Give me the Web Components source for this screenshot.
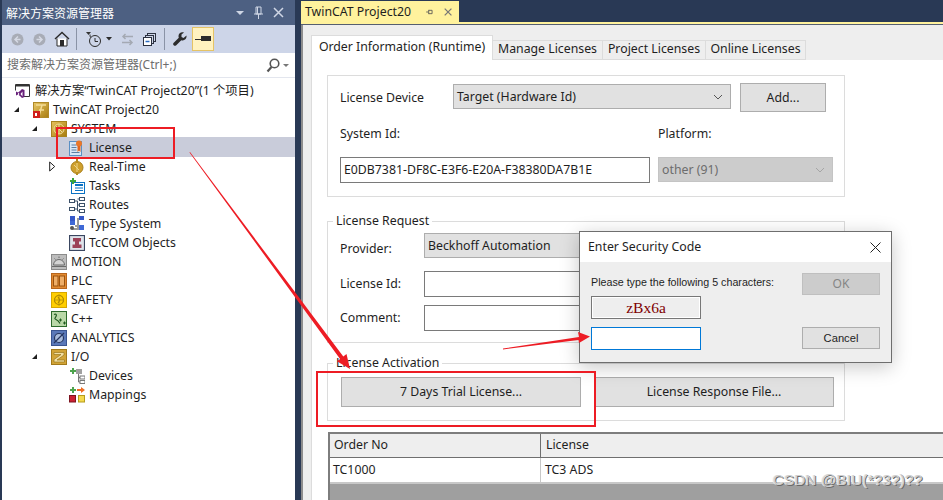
<!DOCTYPE html>
<html lang="zh-CN"><head><meta charset="utf-8"><title>TwinCAT</title>
<style>
html,body{margin:0;padding:0;height:500px;overflow:hidden;background:#fff}
body{font:12.3px/16px "Noto Sans","Noto Sans CJK SC",sans-serif;color:#1e1e1e}
</style></head><body>
<x-app>
  <x-explorer slot="left">
    <x-tree-item level="0" icon="solution">解决方案“TwinCAT Project20”(1 个项目)</x-tree-item>
    <x-tree-item level="1" icon="twincat" exp="open">TwinCAT Project20</x-tree-item>
    <x-tree-item level="2" icon="system" exp="open">SYSTEM</x-tree-item>
    <x-tree-item level="3" icon="license" selected>License</x-tree-item>
    <x-tree-item level="3" icon="realtime" exp="closed">Real-Time</x-tree-item>
    <x-tree-item level="3" icon="tasks">Tasks</x-tree-item>
    <x-tree-item level="3" icon="routes">Routes</x-tree-item>
    <x-tree-item level="3" icon="types">Type System</x-tree-item>
    <x-tree-item level="3" icon="tccom">TcCOM Objects</x-tree-item>
    <x-tree-item level="2" icon="motion">MOTION</x-tree-item>
    <x-tree-item level="2" icon="plc">PLC</x-tree-item>
    <x-tree-item level="2" icon="safety">SAFETY</x-tree-item>
    <x-tree-item level="2" icon="cpp">C++</x-tree-item>
    <x-tree-item level="2" icon="analytics">ANALYTICS</x-tree-item>
    <x-tree-item level="2" icon="io" exp="open">I/O</x-tree-item>
    <x-tree-item level="3" icon="devices">Devices</x-tree-item>
    <x-tree-item level="3" icon="mappings">Mappings</x-tree-item>
  </x-explorer>
  <x-document slot="right">
    <x-group label="" style="--pt:7px;--h:122px">
      <x-row>
        <x-label style="width:113px;height:29px">License Device</x-label>
        <x-select style="width:278px;margin-top:1px">Target (Hardware Id)</x-select>
        <x-button style="width:86px;height:29px;margin-left:9px">Add...</x-button>
      </x-row>
      <x-row style="margin-top:13px;--gap:8px">
        <x-label style="width:310px;height:18px">System Id:</x-label>
        <x-label style="width:175px;height:18px">Platform:</x-label>
      </x-row>
      <x-row style="margin-top:14px;--gap:8px">
        <x-field style="width:310px">E0DB7381-DF8C-E3F6-E20A-F38380DA7B1E</x-field>
        <x-select disabled style="width:175px">other (91)</x-select>
      </x-row>
    </x-group>
    <x-group label="License Request" style="--pt:11px;--h:122px;margin-top:24px">
      <x-row><x-label style="width:84px;padding-top:6px;box-sizing:border-box">Provider:</x-label><x-select style="width:409px">Beckhoff Automation</x-select></x-row>
      <x-row style="margin-top:13px"><x-label style="width:84px">License Id:</x-label><x-field style="width:409px"></x-field></x-row>
      <x-row style="margin-top:8px"><x-label style="width:84px">Comment:</x-label><x-field style="width:409px"></x-field></x-row>
    </x-group>
    <x-group label="License Activation" style="--pt:13px;--pl:13px;--h:58px;margin-top:20px">
      <x-row style="--gap:13px">
        <x-button style="width:240px;height:30px">7 Days Trial License...</x-button>
        <x-button style="width:240px;height:30px">License Response File...</x-button>
      </x-row>
    </x-group>
    <x-order-table></x-order-table>
  </x-document>
  <x-dialog slot="over"></x-dialog>
  <x-annotations slot="over"></x-annotations>
</x-app>
<script>
const ICONS={
solution:'<path d="M.5 1.500h14v12H9" fill="none" stroke="#333"/><path d="M.5 1.500v6" stroke="#333"/><path d="M.5 2h14v1.500H.5z" fill="#333"/><path d="M1 8.500l2 1 2-1.500 2-2 2.500 1v7l-2.500 1-2-2-2-1.500-2 1z" fill="#68217a"/><path d="M3 9.500l1.500 1.500L3 12.500zM7.500 8.500l-2 2.500 2 2.500z" fill="#fff"/>',
twincat:'<defs><linearGradient id="g" x1="0" y1="0" x2="1" y2="1"><stop offset="0" stop-color="#e8c766"/><stop offset="1" stop-color="#a97d10"/></linearGradient></defs><rect x=".5" y=".5" width="15" height="15" fill="url(#g)" stroke="#b08a28"/><path d="M3 3h10M9 3l-3 11M6 8h5" stroke="#f4dd96" stroke-width="1.500" fill="none"/><rect y="9" width="7" height="7" fill="#d0201a"/><rect x="2" y="11" width="2" height="3" fill="#fff"/>',
system:'<defs><linearGradient id="g" x1="0" y1="0" x2="1" y2="1"><stop offset="0" stop-color="#e6c25c"/><stop offset="1" stop-color="#a67b0d"/></linearGradient></defs><rect x=".5" y=".5" width="15" height="15" fill="url(#g)" stroke="#a8831e"/><circle cx="8" cy="8" r="5" fill="#c49a2a" stroke="#efdc9e"/><path d="M8 3v10M5 5l6 6" stroke="#efdc9e"/>',
license:'<rect x=".5" y="1.500" width="12" height="14" fill="#d8e7f6" stroke="#5a8fc4"/><path d="M2.500 5h5M2.500 7.500h5M2.500 10h5M2.500 12.500h8" stroke="#5b7fa5"/><circle cx="10" cy="3.500" r="3" fill="#e9772a"/><path d="M8.500 6h3v6l-1.500-1.500L8.500 12z" fill="#e2661f"/>',
realtime:'<circle cx="8" cy="8.500" r="6" fill="#cfa02e" stroke="#a97f1a"/><path d="M8 0v4M8 13v3" stroke="#b88d1f" stroke-width="2"/><path d="M8 4v9M5 6l5 5" stroke="#ecd488"/>',
tasks:'<rect x="2.500" y="4.500" width="13" height="11" fill="#fff" stroke="#0b72c4"/><rect x="6" y="6" width="8" height="2" fill="#0b72c4"/><path d="M6 10h8M6 12.500h8" stroke="#0b72c4"/><path d="M3 0h2v2h2v2H5v2H3V4H1V2h2z" fill="#3aa53a"/>',
routes:'<g fill="none" stroke="#3c5068"><rect x=".5" y="2.500" width="5" height="3"/><rect x="10.500" y=".5" width="5" height="3"/><rect x="10.500" y="6.500" width="5" height="3"/><rect x=".5" y="10.500" width="5" height="3"/><rect x="10.500" y="12.500" width="5" height="3"/><path d="M5.500 4h3v10h2M8.500 2h2M8.500 8h2M5.500 12h3"/></g>',
types:'<path d="M6 10h3V3h3" fill="none" stroke="#9a9a9a" stroke-width="2"/><path d="M9 5v8H3" fill="none" stroke="#9a9a9a" stroke-width="2"/><rect x="1" y="0" width="5" height="5" fill="#3558c8"/><rect x="1" y="5" width="5" height="4" fill="#3f69d6"/><rect x="10" y="0" width="5" height="4" fill="#3558c8"/><rect x="10" y="9" width="5" height="5" fill="#3f69d6"/><circle cx="3" cy="12" r="2" fill="#555"/>',
tccom:'<rect x=".5" y=".5" width="15" height="15" fill="#dfe3ea" stroke="#3a4660" stroke-width="1.200"/><path d="M4 3h8v3.500h-2v3h2.500V13h-9V9.500H6v-3H4z" fill="#9c4258"/>',
motion:'<rect x=".5" y=".5" width="15" height="15" fill="#bdbdbd" stroke="#8b8b8b"/><path d="M2.500 11a5.500 5.500 0 0 1 11 0z" fill="#d4d4d4" stroke="#6b6b6b"/><path d="M1 12.500h14" stroke="#6b6b6b"/><path d="M8 4v-1.500M4.500 5.500l-1-1M11.500 5.500l1-1" stroke="#6b6b6b"/>',
plc:'<rect x=".5" y=".5" width="15" height="15" fill="#e28a30" stroke="#b7651c"/><rect x="2.500" y="3" width="4.500" height="10" fill="#eeae68" stroke="#9a5310"/><rect x="8.500" y="3" width="5" height="10" fill="#eeae68" stroke="#9a5310"/>',
safety:'<rect x=".5" y=".5" width="15" height="15" fill="#ffce00" stroke="#d6a700"/><circle cx="8" cy="8" r="4.500" fill="none" stroke="#a78200" stroke-width="1.200"/><path d="M8 2v12M3 8h10" stroke="#c09a08"/><path d="M7 5l2 3-2 3" fill="none" stroke="#a78200"/>',
cpp:'<rect x=".5" y=".5" width="15" height="15" fill="#b9d8a8" stroke="#2c6b2c"/><path d="M3 3.500c2-1 3 0 2 2s-2 2 0 3 3 2 4 4" fill="none" stroke="#1f5a1f" stroke-width="1.200"/><path d="M8 9h3M9.500 7.500v3M12 12h3M13.500 10.500v3" stroke="#1f5a1f"/>',
analytics:'<rect x=".5" y=".5" width="15" height="15" fill="#5a78b8" stroke="#3a5490"/><circle cx="8" cy="8" r="4.500" fill="#a8bbdc" stroke="#26365f" stroke-width="1.200"/><path d="M3 13L13 3" stroke="#26365f" stroke-width="1.200"/>',
io:'<rect x=".5" y=".5" width="15" height="15" fill="#d2a437" stroke="#a27a1b"/><path d="M3 3.500h10v2.500L6 11h7.500v2H3v-2.500L10 5.500H3z" fill="#f1dea2" stroke="#8e6b12" stroke-width=".6"/>',
devices:'<path d="M3 0h2v2h2v2H5v2H3V4H1V2h2z" fill="#4da44d"/><rect x="7" y="1" width="6" height="5" fill="#a0a0a0"/><path d="M9.500 6v8h2M9.500 9.500h2" fill="none" stroke="#777"/><rect x="11" y="8" width="5" height="3" fill="#fff" stroke="#777"/><rect x="11" y="12.500" width="5" height="3" fill="#fff" stroke="#777"/>',
mappings:'<path d="M3 0h2v2h2v2H5v2H3V4H1V2h2z" fill="#4da44d"/><path d="M8 2h4V0l4 3-4 3V4H8z" fill="#ef6d22"/><rect x=".5" y="8.500" width="6" height="6.500" fill="#cc2132" stroke="#7d1420"/><rect x="9.500" y="8.500" width="6" height="6.500" fill="#f4d94c" stroke="#b69c1c"/>'
};
function def(name,css,html,extra){
  const tpl=document.createElement('template');
  tpl.innerHTML='<style>'+css+'</style>'+html;
  customElements.define(name,class extends HTMLElement{
    constructor(){super();this.attachShadow({mode:'open'}).append(tpl.content.cloneNode(true))}
    connectedCallback(){extra&&extra.call(this,this.shadowRoot)}
  });
}
def('x-icon',':host{display:inline-flex;width:16px;height:16px;flex:none}svg{display:block;width:100%;height:100%}','<svg viewBox="0 0 16 16"></svg>',function(r){r.querySelector('svg').innerHTML=ICONS[this.getAttribute('name')]||''});

def('x-app',`:host{display:grid;grid-template-columns:295px 648px;width:943px;height:500px;position:relative;overflow:hidden;background:#293955}`,
'<slot name="left"></slot><slot name="right"></slot><slot name="over"></slot>');

def('x-explorer',`:host{display:flex;flex-direction:column;height:500px;padding-left:2px;box-sizing:border-box;overflow:hidden}
.title{height:25px;flex:none;background:#4d6082;color:#fff;display:flex;align-items:center;padding:0 4px;gap:0}
.title span{flex:1;font-size:12px;margin-top:2px}
.tb{height:28px;flex:none;background:#cdd5e8;display:flex;align-items:center;box-sizing:border-box}
.tb svg{display:block;flex:none}
.sep{width:1px;height:22px;background:#8a93a6;flex:none}
.hot{width:22px;height:24px;box-sizing:border-box;background:#fff2c0;border:1px solid #e5c365;display:flex;align-items:center;justify-content:center;flex:none}
.search{height:25px;flex:none;box-sizing:border-box;background:#fff;border-bottom:1px solid #e3e6ee;display:flex;align-items:center;padding:0 5px;color:#6d6d6d;font-size:12px}
.search span{flex:1}
.tree{flex:1;background:#fff;padding-top:3px}`,
`<div class="title"><span>解决方案资源管理器</span>
<svg width="56" height="16" viewBox="0 0 56 16"><path d="M1 6h8l-4 4z" fill="#cfd6e5"/><path d="M21 2h5v7h-5zM23.500 9v5M19 9h9M22.500 2v7" fill="none" stroke="#cfd6e5"/><path d="M39 3l9 9M48 3l-9 9" stroke="#cfd6e5" stroke-width="1.500"/></svg></div>
<div class="tb">
<svg style="margin-left:9px" width="13" height="13" viewBox="0 0 13 13"><circle cx="6.500" cy="6.500" r="6" fill="#a8acb6"/><path d="M7 3.500L4 6.500l3 3M4 6.500h5.500" fill="none" stroke="#d5d9e4" stroke-width="1.500"/></svg>
<svg style="margin-left:9px" width="13" height="13" viewBox="0 0 13 13"><circle cx="6.500" cy="6.500" r="6" fill="#a8acb6"/><path d="M6 3.500l3 3-3 3M9 6.500H3.500" fill="none" stroke="#d5d9e4" stroke-width="1.500"/></svg>
<svg style="margin-left:8px" width="16" height="16" viewBox="0 0 16 16"><path d="M1 8l7-6.500L15 8" fill="none" stroke="#2a2a2a" stroke-width="1.400"/><path d="M3 7.500V15h10V7.500" fill="#fff" stroke="#2a2a2a"/><rect x="6" y="9" width="4" height="6" fill="#2a2a2a"/></svg>
<i class="sep" style="margin-left:6px"></i>
<svg style="margin-left:9px" width="16" height="17" viewBox="0 0 16 17"><path d="M0 1h5L2.500 4z" fill="#333"/><circle cx="9" cy="10" r="5.500" fill="none" stroke="#2c2c2c"/><path d="M9 7v3.500h3" fill="none" stroke="#2c2c2c"/><path d="M4 3.500c0 1 0 2 .500 3" fill="none" stroke="#333"/></svg>
<svg style="margin-left:4px" width="6" height="4" viewBox="0 0 6 4"><path d="M0 0h6L3 3.500z" fill="#2c2c2c"/></svg>
<svg style="margin-left:9px" width="13" height="13" viewBox="0 0 13 13"><path d="M12 3.500H2M4.500 1L2 3.500 4.500 6M1 9.500h10M8.500 7L11 9.500 8.500 12" fill="none" stroke="#a4a9b3" stroke-width="1.500"/></svg>
<svg style="margin-left:9px" width="13" height="13" viewBox="0 0 13 13"><g fill="none" stroke="#2c3140"><rect x="4.500" y=".5" width="8" height="8"/><rect x="2.500" y="2.500" width="8" height="8" fill="#cdd5e8"/><rect x=".5" y="4.500" width="8" height="8" fill="#fff"/></g><path d="M2.500 8.500h4" stroke="#2a6bc0" stroke-width="1.500"/></svg>
<i class="sep" style="margin-left:8px"></i>
<svg style="margin-left:8px" width="14" height="14" viewBox="0 0 14 14"><path d="M13.500 3.500l-3 2.500-2-1 0-2.500L11 .5C8.500-.5 5.500 1 5.500 4c0 .7.1 1.200.3 1.700L.5 11a1.800 1.800 0 0 0 2.500 2.500l5.300-5.300c2.700 1 5.700-1 5.200-4.700z" fill="#2c2c2c"/></svg>
<div class="hot" style="margin-left:5px"><svg width="16" height="6" viewBox="0 0 16 6"><rect x="6" y="0" width="10" height="5" fill="#2c2c2c"/><rect x="0" y="3" width="7" height="1" fill="#2c2c2c"/></svg></div>
</div>
<div class="search"><span>搜索解决方案资源管理器(Ctrl+;)</span>
<svg width="24" height="15" viewBox="0 0 24 15"><circle cx="8.500" cy="5.500" r="4.300" fill="none" stroke="#555" stroke-width="1.600"/><path d="M5.500 9l-4 4.500" stroke="#555" stroke-width="2.200"/><path d="M17 6h6l-3 3z" fill="#777"/></svg></div>
<div class="tree"><slot></slot></div>`);

def('x-tree-item',`:host{display:flex;align-items:center;height:19px;white-space:nowrap;box-sizing:border-box;padding-left:calc(18px * var(--l,0) + 11px)}
:host([selected]){background:#c9ccda;box-shadow:0 -1px 0 #c9ccda}
.exp{width:18px;margin-left:-18px;flex:none;display:flex}
.exp svg{display:block}
x-icon{margin:0 4px 0 2px}`,
`<span class="exp"></span><x-icon></x-icon><slot></slot>`,function(r){
  this.style.setProperty('--l',this.getAttribute('level'));
  r.querySelector('x-icon').setAttribute('name',this.getAttribute('icon'));
  r.querySelector('x-icon').shadowRoot.querySelector('svg').innerHTML=ICONS[this.getAttribute('icon')];
  const e=this.getAttribute('exp');
  if(e==='open')r.querySelector('.exp').innerHTML='<svg width="7" height="7" viewBox="0 0 7 7"><path d="M6 1v5H1z" fill="#1e1e1e"/></svg>';
  if(e==='closed')r.querySelector('.exp').innerHTML='<svg width="7" height="11" viewBox="0 0 7 11"><path d="M.7 1l5 4.500-5 4.500z" fill="#fff" stroke="#1e1e1e"/></svg>';
});

def('x-document',`:host{display:flex;flex-direction:column;height:500px;overflow:hidden;padding-left:6px}
.strip{height:22px;flex:none}
.doc{width:158px;height:21px;margin-top:1px;background:#fff29d;display:flex;align-items:center;padding-left:4px;box-sizing:border-box;gap:10px}
.doc span{width:107px;flex:none;white-space:nowrap}
.rule{height:3px;flex:none;box-sizing:border-box;background:#fff29d;border-bottom:1px solid #555e70}
.frame{flex:1;background:#eee;border-left:2px solid #8d8d8d;display:flex;flex-direction:column;min-height:0}
.tabs{height:35px;flex:none;display:flex;align-items:flex-end;padding-left:8px}
.tab{height:20px;box-sizing:border-box;border:1px solid #dcdcdc;border-left:0;display:flex;align-items:center;justify-content:center;padding-bottom:2px}
.tab.on{height:25px;background:#fff;border:1px solid #dcdcdc;border-bottom:0;padding-bottom:3px}
.page{flex:1;background:#fff;margin-left:8px;border-left:1px solid #dcdcdc;padding:15px 0 0 15px;min-height:0;overflow:hidden}`,
`<div class="strip"><div class="doc"><span>TwinCAT Project20</span>
<svg width="44" height="12" viewBox="0 0 44 12"><path d="M8 3.500v5M8 6h-3M8 4h4v4H8M11 6h0" fill="none" stroke="#555"/><path d="M27 2l8 8M35 2l-8 8" stroke="#777" stroke-width="1.500"/></svg></div></div>
<div class="rule"></div>
<div class="frame"><div class="tabs">
<div class="tab on" style="width:182px">Order Information (Runtime)</div>
<div class="tab" style="width:110px">Manage Licenses</div>
<div class="tab" style="width:103px">Project Licenses</div>
<div class="tab" style="width:100px">Online Licenses</div>
</div><div class="page"><slot></slot></div></div>`);

def('x-group',`:host{display:block;position:relative;width:518px;height:var(--h);box-sizing:border-box;border:1px solid #dcdcdc;padding:var(--pt,8px) 0 0 var(--pl,12px)}
.lg{position:absolute;left:5px;top:-9px;background:#fff;padding:0 3px;white-space:nowrap}
.lg:empty{display:none}`,
`<div class="lg"></div><slot></slot>`,function(r){r.querySelector('.lg').textContent=this.getAttribute('label')||''});

def('x-row',`:host{display:flex;align-items:flex-start;gap:var(--gap,0)}`,'<slot></slot>');
def('x-label',`:host{display:flex;align-items:center;height:25px;flex:none;white-space:nowrap}`,'<slot></slot>');
def('x-button',`:host{display:flex;align-items:center;justify-content:center;flex:none;box-sizing:border-box;background:#e1e1e1;border:1px solid #adadad;white-space:nowrap}`,'<slot></slot>');
def('x-field',`:host{display:flex;align-items:center;height:26px;flex:none;box-sizing:border-box;background:#fff;border:1px solid #7a7a7a;padding-left:3px;white-space:nowrap}`,'<slot></slot>');
def('x-select',`:host{display:flex;align-items:center;height:25px;flex:none;box-sizing:border-box;background:#e1e1e1;border:1px solid #adadad;padding:0 7px 0 3px;white-space:nowrap}
:host([disabled]){background:#ccc;border-color:#c4c4c4;color:#6d6d6d}
span{flex:1}svg{flex:none}
:host([disabled]) path{stroke:#a5a5a5}`,
'<span><slot></slot></span><svg width="10" height="6" viewBox="0 0 10 6"><path d="M1 1l4 4 4-4" fill="none" stroke="#555"/></svg>');

def('x-order-table',`:host{display:block;margin:11px 0 0 1px;height:70px;box-sizing:border-box;border-top:2px solid #7d7d7d;border-left:2px solid #7d7d7d;background:#9f9f9f}
.r{display:grid;grid-template-columns:211px 1fr;box-sizing:border-box}
.h{height:24px;background:#eee;border-bottom:1px solid #6f6f6f}
.h div{display:flex;align-items:center;padding:0 0 2px 4px}
.h div+div{padding-left:5px}
.h div:first-child{border-right:1px solid #6f6f6f;box-sizing:border-box}
.b{height:26px;background:#fff;border-bottom:2px solid #c8c8c8}
.b div{display:flex;align-items:center;padding-left:3px}
.b div+div{padding-left:4px}
.b div:first-child{border-right:1px solid #c8c8c8;box-sizing:border-box}`,
`<div class="r h"><div>Order No</div><div>License</div></div><div class="r b"><div>TC1000</div><div>TC3 ADS</div></div>`);

def('x-dialog',`:host{position:absolute;left:579px;top:231px;width:313px;height:132px;box-sizing:border-box;border:1px solid #6e6e6e;background:#eee;box-shadow:0 4px 18px rgba(0,0,0,.22);display:flex;flex-direction:column}
.t{height:30px;flex:none;background:#fff;display:flex;align-items:center;justify-content:space-between;padding:0 10px 0 8px}
.body{flex:1;display:grid;grid-template-columns:110px 78px;justify-content:space-between;padding:0 11px 0 11px}
.l{display:flex;flex-direction:column;font:10.700px/16px "Liberation Sans",sans-serif;padding-top:12px}
.cap{height:22px;white-space:nowrap}
.code{height:23px;box-sizing:border-box;border:1px solid #777;box-shadow:inset 0 0 0 1px #fff;display:flex;align-items:center;justify-content:center;font:15.500px/20px "Liberation Serif",serif;color:#7f0000}
.in{height:23px;margin-top:8px;box-sizing:border-box;border:1px solid #0078d7;background:#fff}
.r{display:flex;flex-direction:column;padding-top:11px;font:11.200px/16px "Liberation Sans",sans-serif}
.b{height:22px;box-sizing:border-box;display:flex;align-items:center;justify-content:center;background:#e1e1e1;border:1px solid #adadad}
.ok{background:#ccc;border-color:#bfbfbf;color:#858585;font:12px/16px "Noto Sans",sans-serif;margin-bottom:32px}`,
`<div class="t"><span>Enter Security Code</span><svg width="11" height="11" viewBox="0 0 11 11"><path d="M.5.5l10 10M10.500.5l-10 10" stroke="#222"/></svg></div>
<div class="body"><div class="l"><div class="cap">Please type the following 5 characters:</div><div class="code">zBx6a</div><div class="in"></div></div>
<div class="r"><div class="b ok">OK</div><div class="b">Cancel</div></div></div>`);

def('x-annotations',`:host{position:absolute;left:0;top:0;width:943px;height:500px;pointer-events:none}
svg{display:block}
.wm{position:absolute;left:773px;top:471px;font:15px/17px "Liberation Sans",sans-serif;color:#cfcfcf;text-shadow:1px 1px 0 #6a6a6a,-1px 0 0 #e9e9e9;white-space:nowrap;letter-spacing:.3px}`,
`<svg width="943" height="500" viewBox="0 0 943 500">
<rect x="57" y="128" width="117" height="30" fill="none" stroke="#ed1c24" stroke-width="2"/>
<rect x="317" y="372" width="278" height="54" fill="none" stroke="#ed1c24" stroke-width="2"/>
<polygon points="190,152 343.300,356.500 346.500,354.100 350,369 336.900,361.300 340.100,358.900 189.500,152.400" fill="#ed1c24"/>
<polygon points="503,348.500 579,337 578,332 590,336.500 579,343 578.500,340 503,349.500" fill="#ed1c24"/>
</svg><div class="wm">CSDN @BIU(*?3?)??</div>`);
</script>
</body></html>
